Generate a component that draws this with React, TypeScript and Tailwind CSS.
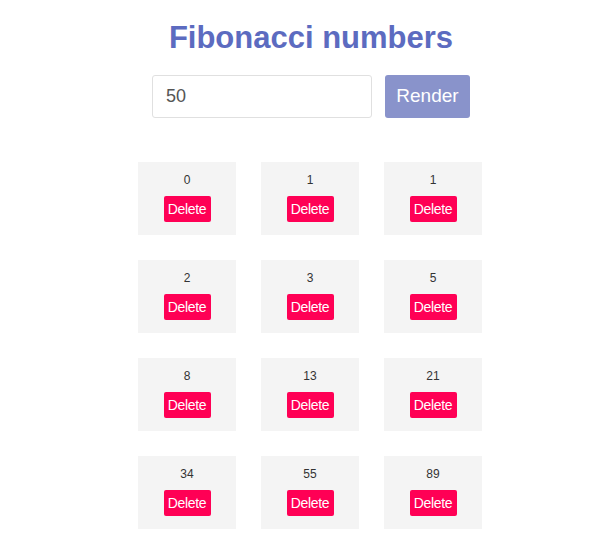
import { useState } from "react"

function fib(count: number) {
  const out: number[] = []
  let a = 0
  let b = 1
  for (let i = 0; i < count; i++) {
    out.push(a)
    const next = a + b
    a = b
    b = next
  }
  return out
}

export default function App() {
  const [value, setValue] = useState("50")
  const [items, setItems] = useState<number[]>(() => fib(12))

  return (
    <div className="min-h-screen bg-white pl-[20px] font-['Liberation_Sans',Arial,sans-serif]">
      <div className="flex flex-col items-center">
        <h1 className="mt-[19px] ml-[2px] text-[31px] leading-[37px] font-bold text-[#5c6bc0]">
          Fibonacci numbers
        </h1>
        <div className="mt-[19px] ml-[2px] flex gap-[13px]">
          <input
            value={value}
            onChange={(e) => setValue(e.target.value)}
            className="h-[43px] w-[220px] rounded-[3px] border border-[#e0e0e0] pl-[13px] text-[18px] text-[#555] outline-none"
          />
          <button
            onClick={() => setItems(fib(Math.min(Number(value) || 0, 12)))}
            className="h-[43px] w-[85px] rounded-[3px] bg-[#8993cb] text-[19px] text-white"
          >
            Render
          </button>
        </div>
        <div className="mt-[44px] grid grid-cols-[repeat(3,98px)] gap-x-[25px] gap-y-[25px]">
          {items.map((n, i) => (
            <div
              key={i}
              className="flex h-[73px] flex-col items-center bg-[#f4f4f4] pt-[11px]"
            >
              <span className="text-[12px] leading-[14px] text-[#333]">{n}</span>
              <button
                onClick={() => setItems(items.filter((_, j) => j !== i))}
                className="mt-[9px] h-[26px] w-[47px] rounded-[2px] bg-[#ff0055] text-[14px] tracking-[-0.3px] text-white"
              >
                Delete
              </button>
            </div>
          ))}
        </div>
      </div>
    </div>
  )
}
